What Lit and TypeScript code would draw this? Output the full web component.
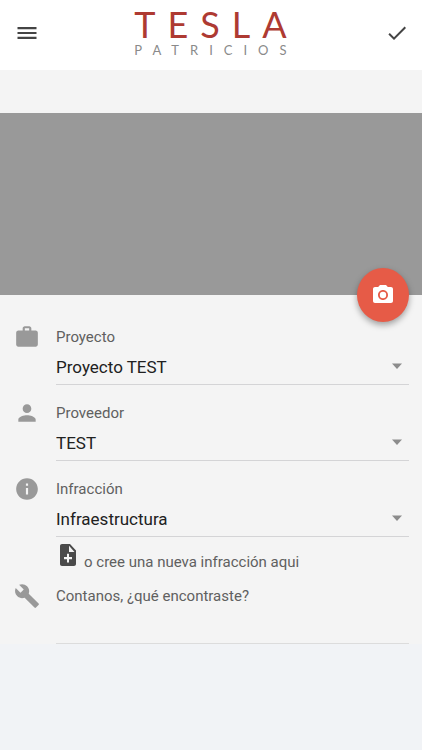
import { LitElement, html, css, svg } from "lit";
import { customElement, property } from "lit/decorators.js";

const paths = {
  work: svg`<path d="M20 6h-4V4c0-1.110-.890-2-2-2h-4c-1.110 0-2 .890-2 2v2H4c-1.110 0-1.990.890-1.990 2L2 19c0 1.110.890 2 2 2h16c1.110 0 2-.890 2-2V8c0-1.110-.890-2-2-2zm-6 0h-4V4h4v2z"/>`,
  person: svg`<path d="M12 12c2.210 0 4-1.790 4-4s-1.790-4-4-4-4 1.790-4 4 1.790 4 4 4zm0 2c-2.670 0-8 1.340-8 4v2h16v-2c0-2.660-5.330-4-8-4z"/>`,
  info: svg`<path d="M12 2C6.480 2 2 6.480 2 12s4.480 10 10 10 10-4.480 10-10S17.520 2 12 2zm1 15h-2v-6h2v6zm0-8h-2V7h2v2z"/>`,
  build: svg`<path d="M22.700 19l-9.100-9.100c.900-2.300.400-5-1.500-6.900-2-2-5-2.400-7.400-1.300L9 6 6 9 1.600 4.700C.4 7.100.9 10.100 2.900 12.100c1.900 1.900 4.600 2.400 6.900 1.500l9.100 9.100c.4.4 1 .4 1.400 0l2.300-2.300c.5-.4.5-1.100.1-1.400z"/>`,
  noteAdd: svg`<path d="M14 1H6c-1.100 0-1.990.9-1.990 2L4 21c0 1.100.890 2 1.990 2H18c1.100 0 2-.9 2-2V7.500L14 1zm2 15.200h-3v3.300h-2v-3.300H8V14h3v-3.300h2V14h3v2.200zM13 9V2.700L18.500 9H13z"/>`,
  camera: svg`<circle cx="12" cy="12" r="3.200"/><path d="M9 2L7.170 4H4c-1.100 0-2 .9-2 2v12c0 1.100.9 2 2 2h16c1.100 0 2-.9 2-2V6c0-1.100-.9-2-2-2h-3.170L15 2H9zm3 15c-2.760 0-5-2.240-5-5s2.240-5 5-5 5 2.240 5 5-2.240 5-5 5z"/>`,
  menu: svg`<path d="M2.500 6h19v2.200h-19zM2.500 10.900h19v2.200h-19zM2.500 15.800h19v2.200h-19z"/>`,
  check: svg`<path d="M9 16.200L4.800 12l-1.400 1.400L9 19 21 7l-1.400-1.400z"/>`,
  arrow: svg`<path d="M7 8.500l5 5.500 5-5.500z"/>`,
};

type IconName = keyof typeof paths;

@customElement("md-icon")
export class MdIcon extends LitElement {
  @property() name: IconName = "menu";

  static styles = css`
    :host {
      display: block;
      flex: none;
      width: 24px;
      height: 24px;
    }
    .glyph {
      display: block;
      width: 100%;
      height: 100%;
      fill: currentColor;
    }
  `;

  render() {
    return html`<svg class="glyph" viewBox="0 0 24 24" aria-hidden="true">${paths[this.name]}</svg>`;
  }
}

interface Field {
  id: string;
  icon: IconName;
  label: string;
  value: string;
}

@customElement("app-root")
export class AppRoot extends LitElement {
  private fields: Field[] = [
    { id: "proyecto", icon: "work", label: "Proyecto", value: "Proyecto TEST" },
    { id: "proveedor", icon: "person", label: "Proveedor", value: "TEST" },
    { id: "infraccion", icon: "info", label: "Infracción", value: "Infraestructura" },
  ];

  static styles = css`
    :host {
      display: block;
      min-height: 100vh;
      background: #f1f3f6;
      color: #606060;
      font-family: Roboto, "Liberation Sans", sans-serif;
      font-size: 15px;
      line-height: 22px;
    }
    button,
    select,
    textarea {
      margin: 0;
      padding: 0;
      border: 0;
      background: none;
      color: inherit;
      font: inherit;
    }
    .bar {
      display: flex;
      align-items: center;
      justify-content: space-between;
      box-sizing: border-box;
      height: 70px;
      padding: 0 13px 4px 15px;
      background: #fff;
    }
    .tool {
      color: #444;
      cursor: pointer;
    }
    .brand {
      display: flex;
      flex-direction: column;
      padding: 0 3px 3px 0;
      font-family: Lato, sans-serif;
    }
    .name {
      color: #ae3a32;
      font-size: 36px;
      line-height: 36px;
      letter-spacing: 12px;
      margin-right: -12px;
    }
    .place {
      color: #8a8a8a;
      font-size: 13px;
      line-height: 16px;
      letter-spacing: 11px;
      margin-right: -11px;
    }
    .content {
      padding-top: 43px;
      background: #f4f4f4;
    }
    .photo {
      position: relative;
      height: 182px;
      background: #999;
    }
    .shoot {
      position: absolute;
      right: 13px;
      bottom: -27px;
      display: grid;
      place-items: center;
      width: 52px;
      height: 54px;
      border-radius: 50%;
      background: #e65b47;
      color: #fff;
      box-shadow: 0 3px 6px rgba(0, 0, 0, 0.35);
      cursor: pointer;
    }
    .form {
      padding: 31px 13px 0 14px;
    }
    .row {
      display: flex;
      align-items: flex-start;
      gap: 16px;
      padding-bottom: 17px;
    }
    .row.linked {
      padding-bottom: 12px;
    }
    .row.last {
      padding-bottom: 0;
    }
    .lead {
      width: 26px;
      height: 26px;
      margin-top: -2px;
      color: #999;
    }
    .field {
      display: flex;
      flex: 1;
      flex-direction: column;
      min-width: 0;
    }
    .pick {
      display: grid;
      align-items: center;
    }
    .select {
      grid-area: 1 / 1;
      appearance: none;
      box-sizing: border-box;
      width: 100%;
      height: 37px;
      padding-top: 2px;
      border-bottom: 1px solid #d4d4d6;
      border-radius: 0;
      color: #212121;
      font-size: 17px;
    }
    .caret {
      grid-area: 1 / 1;
      justify-self: end;
      color: #8c8c8c;
      pointer-events: none;
    }
    .create {
      display: flex;
      align-items: flex-end;
      align-self: flex-start;
      gap: 4px;
      margin-top: 6px;
      color: inherit;
      text-decoration: none;
    }
    .add {
      margin-bottom: 6px;
      color: #4a4a4a;
    }
    .text {
      box-sizing: border-box;
      height: 37px;
      padding: 7px 0;
      border-bottom: 1px solid #dcdcdc;
      resize: none;
      overflow: hidden;
    }
  `;

  private renderField(f: Field) {
    const linked = f.id === "infraccion";
    return html`
      <div class=${linked ? "row linked" : "row"}>
        <md-icon class="lead" name=${f.icon}></md-icon>
        <div class="field">
          <label for=${f.id}>${f.label}</label>
          <div class="pick">
            <select class="select" id=${f.id}>
              <option>${f.value}</option>
            </select>
            <md-icon class="caret" name="arrow"></md-icon>
          </div>
          ${linked
            ? html`<a class="create" href="#nueva">
                <md-icon class="add" name="noteAdd"></md-icon>
                <span>o cree una nueva infracción aqui</span>
              </a>`
            : null}
        </div>
      </div>
    `;
  }

  render() {
    return html`
      <header class="bar">
        <button class="tool" aria-label="Menú"><md-icon name="menu"></md-icon></button>
        <div class="brand">
          <span class="name">TESLA</span>
          <span class="place">PATRICIOS</span>
        </div>
        <button class="tool" aria-label="Guardar"><md-icon name="check"></md-icon></button>
      </header>
      <main class="content">
        <div class="photo">
          <button class="shoot" aria-label="Tomar foto"><md-icon name="camera"></md-icon></button>
        </div>
        <form class="form">
          ${this.fields.map((f) => this.renderField(f))}
          <div class="row last">
            <md-icon class="lead" name="build"></md-icon>
            <div class="field">
              <label for="detalle">Contanos, ¿qué encontraste?</label>
              <textarea class="text" id="detalle" rows="1"></textarea>
            </div>
          </div>
        </form>
      </main>
    `;
  }
}
